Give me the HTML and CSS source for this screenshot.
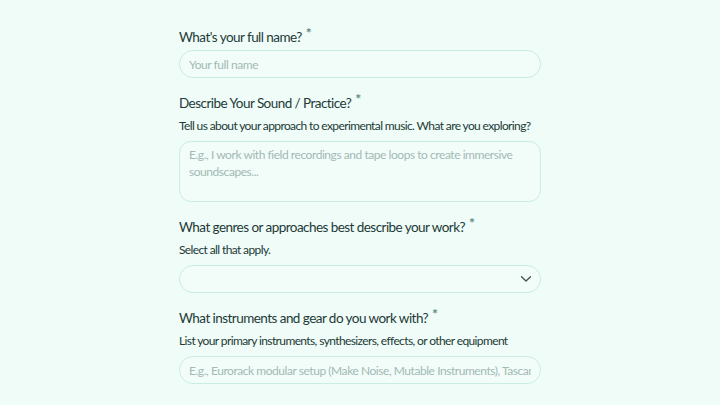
FILE: index.html
```html
<!DOCTYPE html>
<html lang="en">
<head>
<meta charset="utf-8">
<title>Application</title>
<link rel="stylesheet" href="styles.css">
</head>
<body>
<form class="form">
  <div class="field">
    <label class="title title-tight">What's your full name?<span class="req">*</span></label>
    <input class="input" type="text" placeholder="Your full name">
  </div>
  <div class="field">
    <label class="title">Describe Your Sound / Practice?<span class="req">*</span></label>
    <p class="desc">Tell us about your approach to experimental music. What are you exploring?</p>
    <textarea class="textarea" placeholder="E.g., I work with field recordings and tape loops to create immersive soundscapes..."></textarea>
  </div>
  <div class="field">
    <label class="title">What genres or approaches best describe your work?<span class="req">*</span></label>
    <p class="desc">Select all that apply.</p>
    <div class="select">
      <svg class="chev" width="12" height="8" viewBox="0 0 12 8"><path d="M1.5 1.8 L6 6 L10.5 1.8" fill="none" stroke="#3a5350" stroke-width="1.3" stroke-linecap="round" stroke-linejoin="round"/></svg>
    </div>
  </div>
  <div class="field">
    <label class="title">What instruments and gear do you work with?<span class="req">*</span></label>
    <p class="desc">List your primary instruments, synthesizers, effects, or other equipment</p>
    <input class="input" type="text" placeholder="E.g., Eurorack modular setup (Make Noise, Mutable Instruments), Tascam 4-track, contact mics">
  </div>
</form>
</body>
</html>
```
FILE: styles.css
```css
html, body {
  margin: 0;
  padding: 0;
  background: #effcf8;
}
body {
  font-family: Lato, "Noto Sans", sans-serif;
  color: #1e3a37;
}
.form {
  width: 362px;
  margin: 0 auto;
  padding-top: 27px;
  display: flex;
  flex-direction: column;
  gap: 15px;
}
.field {
  display: flex;
  flex-direction: column;
}
.title {
  font-size: 13.5px;
  line-height: 20px;
  font-weight: 400;
  letter-spacing: -0.55px;
  margin-bottom: 5px;
}
.title-tight {
  margin-bottom: 3px;
}
.req {
  font-size: 14px;
  font-weight: 700;
  color: #5f8a82;
  vertical-align: 4px;
  margin-left: 4px;
  line-height: 0;
}
.desc {
  margin: 0 0 7px;
  font-size: 12px;
  line-height: 16px;
  letter-spacing: -0.62px;
}
.input, .textarea, .select {
  box-sizing: border-box;
  width: 100%;
  background: #f2fdfa;
  border: 1px solid #c9ede3;
  font-family: inherit;
  font-size: 12px;
  letter-spacing: -0.45px;
  color: #1e3a37;
  outline: none;
}
.input {
  height: 28px;
  border-radius: 14px;
  padding: 0 9px;
}
.textarea {
  height: 61px;
  border-radius: 12px;
  padding: 4px 9px;
  line-height: 17px;
  resize: none;
  display: block;
}
.input::placeholder, .textarea::placeholder {
  color: #a2b9b4;
}
.select {
  height: 28px;
  border-radius: 14px;
  display: flex;
  align-items: center;
  justify-content: flex-end;
  padding-right: 8px;
}
.chev {
  display: block;
}
```
